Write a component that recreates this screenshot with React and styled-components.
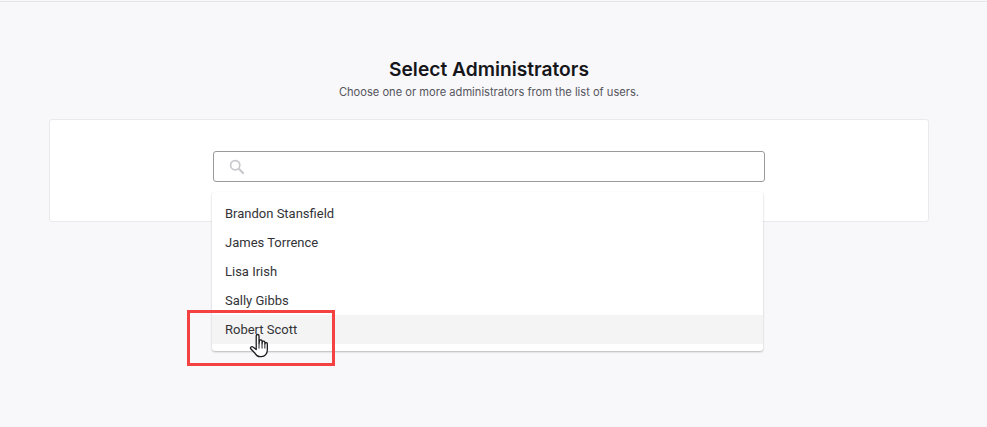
import styled, { createGlobalStyle } from "styled-components";

const users = ["Brandon Stansfield", "James Torrence", "Lisa Irish", "Sally Gibbs", "Robert Scott"];

const GlobalStyle = createGlobalStyle`
  html, body {
    margin: 0;
    padding: 0;
    height: 100%;
    background: #f8f8fb;
  }
  body {
    font-family: "Inter", "Liberation Sans", sans-serif;
    overflow: hidden;
  }
`;

const Page = styled.div`
  position: relative;
  display: flex;
  flex-direction: column;
  height: 427px;
  padding: 0 58px 0 49px;
  box-sizing: border-box;
`;

const TopLine = styled.div`
  flex: none;
  height: 1px;
  margin: 1px -58px 0 -49px;
  background: #e6e6ea;
`;

const Header = styled.header`
  display: flex;
  flex-direction: column;
  align-items: center;
  gap: 3px;
  padding-top: 56px;
`;

const Title = styled.h1`
  margin: 0;
  font-size: 19.2px;
  line-height: 23px;
  font-weight: 600;
  color: #16161a;
`;

const Subtitle = styled.p`
  margin: 0;
  font-size: 11.13px;
  line-height: 16px;
  color: #55555b;
`;

const Card = styled.section`
  display: flex;
  justify-content: center;
  box-sizing: border-box;
  height: 103px;
  margin-top: 19px;
  padding-top: 31px;
  background: #fff;
  border: 1px solid #e9e9ee;
  border-radius: 3px;
`;

const SearchField = styled.div`
  position: relative;
  width: 552px;
  height: 31px;
`;

const SearchBox = styled.div`
  display: flex;
  align-items: center;
  box-sizing: border-box;
  height: 100%;
  padding-left: 15px;
  border: 1px solid #9a9a9a;
  border-radius: 3px;
  background: #fff;
`;

const Dropdown = styled.ul`
  position: absolute;
  left: -1px;
  top: 41px;
  width: 551px;
  box-sizing: border-box;
  margin: 0;
  padding: 7px 0 7px;
  list-style: none;
  background: #fff;
  border-radius: 3px;
  box-shadow: 0 1px 2px rgba(0, 0, 0, 0.26);
`;

const Item = styled.li`
  height: 29px;
  padding-left: 13px;
  font-family: "Roboto", "Liberation Sans", sans-serif;
  font-size: 13px;
  line-height: 29px;
  color: #333337;
  background: ${(p) => (p.$active ? "#f4f4f4" : "transparent")};
`;

const Highlight = styled.div`
  position: absolute;
  left: 187px;
  top: 310px;
  width: 148px;
  height: 56px;
  box-sizing: border-box;
  border: 3px solid #f44141;
  pointer-events: none;
`;

const Cursor = styled.svg`
  position: absolute;
  left: 249px;
  top: 333px;
  width: 22px;
  height: 27px;
`;

const SearchIcon = () => (
  <svg width="16" height="16" viewBox="0 0 16 16" fill="none" stroke="#c8c8cd">
    <circle cx="6.2" cy="6.2" r="4.6" strokeWidth="1.7" />
    <path d="M9.8 9.8l4.9 4.9" strokeWidth="2.2" />
  </svg>
);

const HandCursor = () => (
  <Cursor viewBox="0 0 20 25">
    <path
      d="M6.5 2.6c0-1.6 2.6-1.6 2.6 0v7.2l.4-2.6c.3-1.3 2.4-1.1 2.4.3v2.4l.3-1.6c.3-1.2 2.3-1 2.3.4v1.8l.3-.9c.4-1 2-.8 2 .5v5.6c0 3.2-2.1 6.2-5.6 6.2H10c-2.4 0-3.6-1.4-4.6-3.1L1.4 14.6c-.8-1.4.9-2.7 2.1-1.6l3 2.3z"
      fill="#fff"
      stroke="#1c1c20"
      strokeWidth="1.2"
      strokeLinejoin="round"
    />
    <path d="M9.1 9.8v4.6M11.9 10v4.4M14.5 10.8v3.6" stroke="#1c1c20" strokeWidth="0.9" fill="none" />
  </Cursor>
);

export default function App() {
  return (
    <>
      <GlobalStyle />
      <Page>
        <TopLine />
        <Header>
          <Title>Select Administrators</Title>
          <Subtitle>Choose one or more administrators from the list of users.</Subtitle>
        </Header>
        <Card>
          <SearchField>
            <SearchBox>
              <SearchIcon />
            </SearchBox>
            <Dropdown>
              {users.map((name) => (
                <Item key={name} $active={name === "Robert Scott"}>
                  {name}
                </Item>
              ))}
            </Dropdown>
          </SearchField>
        </Card>
        <Highlight />
        <HandCursor />
      </Page>
    </>
  );
}
